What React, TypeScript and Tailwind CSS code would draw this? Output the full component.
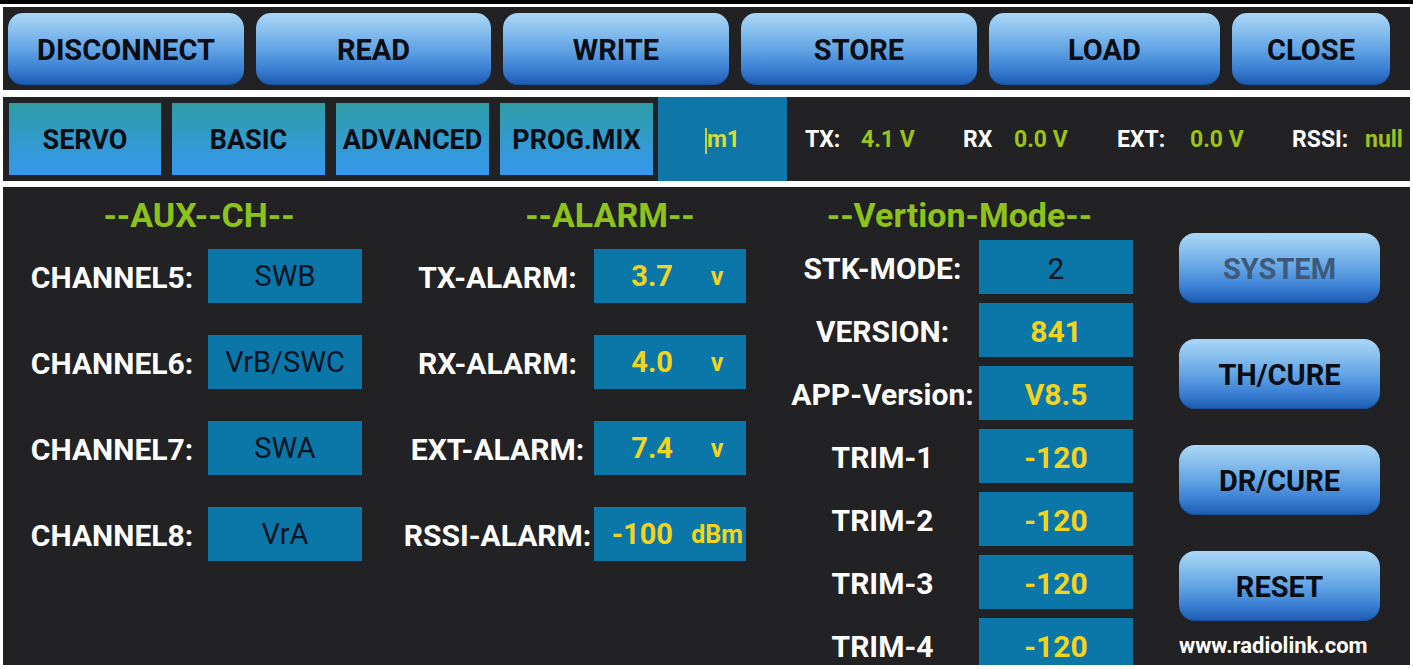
import React from "react";

const topButtons: { label: string; w: string }[] = [
  { label: "DISCONNECT", w: "w-[236px]" },
  { label: "READ", w: "w-[235px]" },
  { label: "WRITE", w: "w-[226px]" },
  { label: "STORE", w: "w-[236px]" },
  { label: "LOAD", w: "w-[231px]" },
  { label: "CLOSE", w: "w-[158px]" },
];

const tabs = ["SERVO", "BASIC", "ADVANCED", "PROG.MIX"];

const auxChannels = [
  { label: "CHANNEL5:", value: "SWB" },
  { label: "CHANNEL6:", value: "VrB/SWC" },
  { label: "CHANNEL7:", value: "SWA" },
  { label: "CHANNEL8:", value: "VrA" },
];

const alarms = [
  { label: "TX-ALARM:", value: "3.7", unit: "v" },
  { label: "RX-ALARM:", value: "4.0", unit: "v" },
  { label: "EXT-ALARM:", value: "7.4", unit: "v" },
  { label: "RSSI-ALARM:", value: "-100", unit: "dBm" },
];

const versions: { label: string; value: string; dark?: boolean }[] = [
  { label: "STK-MODE:", value: "2", dark: true },
  { label: "VERSION:", value: "841" },
  { label: "APP-Version:", value: "V8.5" },
  { label: "TRIM-1", value: "-120" },
  { label: "TRIM-2", value: "-120" },
  { label: "TRIM-3", value: "-120" },
  { label: "TRIM-4", value: "-120" },
];

const sideButtons = [
  { label: "SYSTEM", disabled: true },
  { label: "TH/CURE" },
  { label: "DR/CURE" },
  { label: "RESET" },
];

const glossy =
  "bg-[linear-gradient(180deg,#aad7f6_0%,#8cc2ee_22%,#60a2e3_52%,#3a7fd3_78%,#1d5bb0_100%)] shadow-[inset_0_-1px_0_#16519e]";

function Heading({ text, className }: { text: string; className?: string }) {
  return (
    <div
      className={`h-[40px] whitespace-nowrap text-center text-[34px] font-bold leading-[40px] text-[#8dc21c] ${className ?? ""}`}
    >
      {text}
    </div>
  );
}

function Label({ text }: { text: string }) {
  return (
    <div className="flex w-[193px] shrink-0 justify-center whitespace-nowrap pt-[3px] text-[30px] font-bold leading-none text-white">
      {text}
    </div>
  );
}

export default function App() {
  return (
    <div className="h-[669px] w-[1413px] overflow-hidden bg-white font-['Roboto','Liberation_Sans',sans-serif]">
      <div className="h-[4px] bg-black" />

      {/* action bar */}
      <div className="mx-[3px] mt-[3px] flex h-[83px] items-start gap-[12px] bg-[#222123] pl-[5px] pt-[6px]">
        {topButtons.map((b) => (
          <button
            key={b.label}
            className={`${b.w} flex h-[72px] shrink-0 items-center justify-center rounded-[15px] pt-[4px] ${glossy} text-[29px] font-bold text-[#0a0d14]`}
          >
            {b.label}
          </button>
        ))}
      </div>

      {/* tabs + telemetry */}
      <div className="mx-[3px] mt-[7px] flex h-[84px] bg-[#222123]">
        <div className="flex gap-[11px] pl-[6px] pt-[6px]">
          {tabs.map((t, i) => (
            <div
              key={t}
              className={`${i === 0 ? "w-[152px]" : "w-[153px]"} flex h-[72px] items-center justify-center bg-[linear-gradient(180deg,#2f9ca5_0%,#339ad6_65%,#3598ee_100%)] pt-[3px] text-[27px] font-bold text-[#0a0d14]`}
            >
              {t}
            </div>
          ))}
        </div>
        <div className="ml-[5px] flex h-full w-[129px] items-center justify-center bg-[#0e76a8] pt-[3px] text-[23px] font-bold text-[#d6da3c]">
          <span className="inline-block h-[26px] w-[2px] bg-[#c9cf3a]" />
          m1
        </div>
        <div className="flex items-center pt-[3px] text-[23px] font-bold">
          <span className="ml-[18px] w-[56px] text-white">TX:</span>
          <span className="w-[102px] text-[#9cc21c]">4.1 V</span>
          <span className="w-[51px] text-white">RX</span>
          <span className="w-[103px] text-[#9cc21c]">0.0 V</span>
          <span className="w-[73px] text-white">EXT:</span>
          <span className="w-[102px] text-[#9cc21c]">0.0 V</span>
          <span className="w-[73px] text-white">RSSI:</span>
          <span className="text-[#9cc21c]">null</span>
        </div>
      </div>

      {/* settings */}
      <div className="mx-[3px] mt-[6px] flex h-[478px] items-start overflow-hidden bg-[#222123]">
        {/* aux channels */}
        <div className="ml-[13px] flex w-[346px] flex-col pt-[8px]">
          <Heading text="--AUX--CH--" className="pl-[20px]" />
          <div className="mt-[14px] flex flex-col gap-[32px]">
            {auxChannels.map((c) => (
              <div key={c.label} className="flex h-[54px] items-center">
                <div className="flex w-[192px] shrink-0 justify-center whitespace-nowrap pt-[3px] text-[30px] font-bold leading-none text-white">
                  {c.label}
                </div>
                <div className="flex h-full w-[154px] items-center justify-center bg-[#0b77a8] pt-[2px] text-[29px] text-[#08141f]">
                  {c.value}
                </div>
              </div>
            ))}
          </div>
        </div>

        {/* alarms */}
        <div className="ml-[39px] flex w-[345px] flex-col pt-[8px]">
          <Heading text="--ALARM--" className="pl-[73px]" />
          <div className="mt-[14px] flex flex-col gap-[32px]">
            {alarms.map((a) => (
              <div key={a.label} className="flex h-[54px] items-center">
                <Label text={a.label} />
                <div className="flex h-full w-[152px] items-center bg-[#0b77a8] pt-[2px] font-bold text-[#f2d31e]">
                  <span className="w-[79px] text-right text-[29px]">{a.value}</span>
                  <span className="ml-[15px] w-[58px] text-center text-[25px]">{a.unit}</span>
                </div>
              </div>
            ))}
          </div>
        </div>

        {/* version / mode */}
        <div className="ml-[40px] flex w-[347px] flex-col pt-[8px]">
          <Heading text="--Vertion-Mode--" />
          <div className="mt-[5px] flex flex-col gap-[9px]">
            {versions.map((v) => (
              <div key={v.label} className="flex h-[54px] items-center">
                <Label text={v.label} />
                <div
                  className={`flex h-full w-[154px] items-center justify-center bg-[#0b77a8] pt-[2px] text-[30px] ${
                    v.dark ? "text-[#08141f]" : "font-bold text-[#f2d31e]"
                  }`}
                >
                  {v.value}
                </div>
              </div>
            ))}
          </div>
        </div>

        {/* side actions */}
        <div className="ml-[46px] flex w-[201px] flex-col pt-[46px]">
          <div className="flex flex-col gap-[36px]">
            {sideButtons.map((b) => (
              <button
                key={b.label}
                className={`flex h-[70px] items-center justify-center rounded-[16px] pt-[4px] ${glossy} text-[29px] font-bold ${
                  b.disabled ? "text-[#3d5a7c]" : "text-[#0a0d14]"
                }`}
              >
                {b.label}
              </button>
            ))}
          </div>
          <div className="mt-[12px] whitespace-nowrap pr-[14px] text-center text-[22px] font-bold leading-[26px] text-white">
            www.radiolink.com
          </div>
        </div>
      </div>
    </div>
  );
}
